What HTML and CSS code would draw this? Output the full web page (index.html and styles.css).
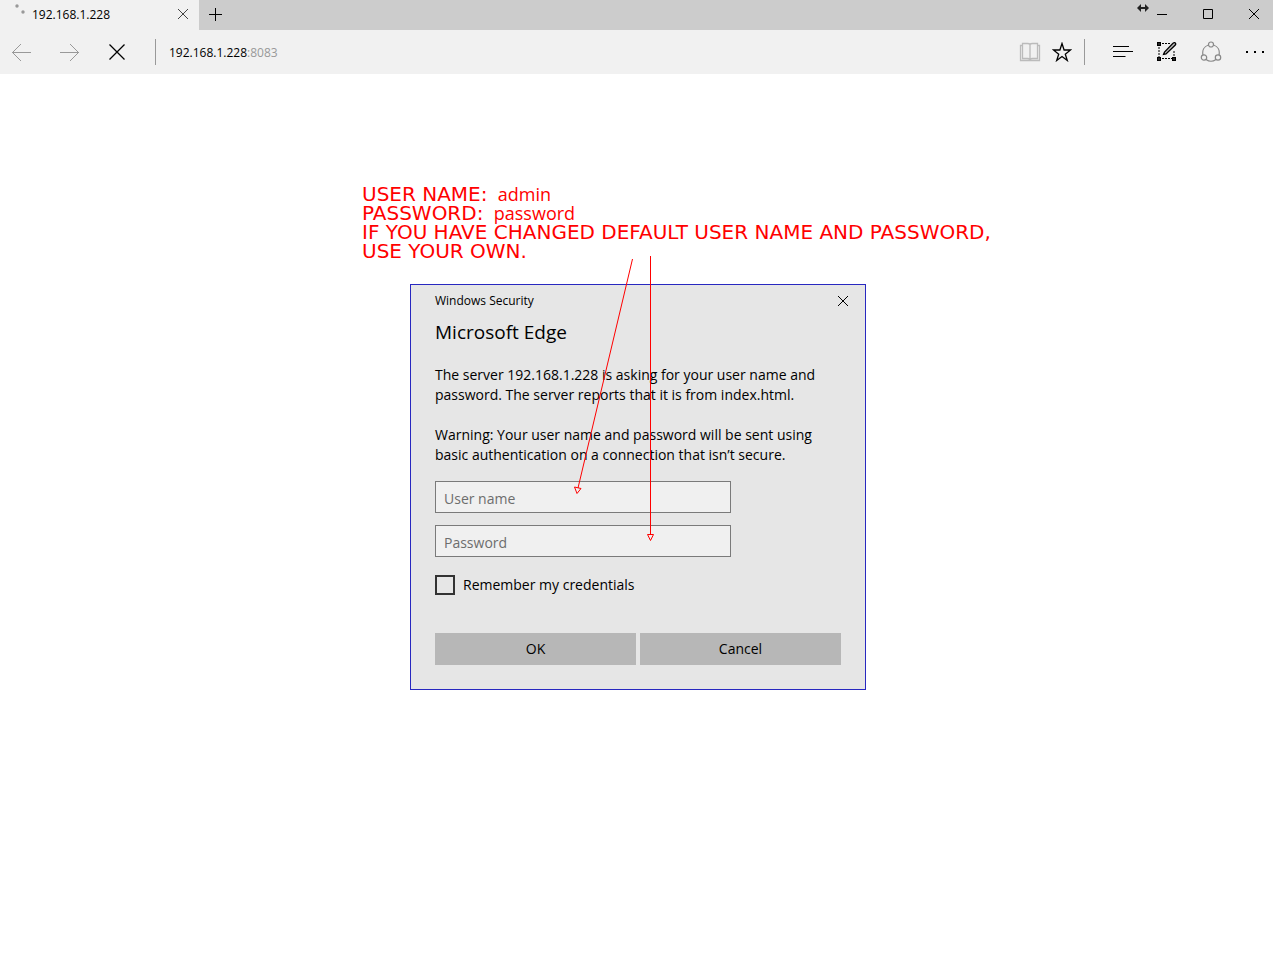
FILE: index.html
```html
<!DOCTYPE html>
<html lang="en">
<head>
    <meta charset="UTF-8">
    <meta name="viewport" content="width=device-width, initial-scale=1.0">
    <title>192.168.1.228</title>
    <link rel="stylesheet" href="styles.css">
</head>
<body>

<div class="titlebar">
    <div class="tab">
        <svg class="spinner" width="14" height="14" viewBox="0 0 14 14"><circle cx="5" cy="2" r="1.7"/><circle cx="11" cy="8" r="1.7"/></svg>
        <span class="tab-title">192.168.1.228</span>
        <button class="icon-button tab-close" aria-label="Close tab">
            <svg width="12" height="12" viewBox="0 0 12 12"><path d="M1 1l10 10M11 1L1 11"/></svg>
        </button>
    </div>
    <button class="icon-button new-tab" aria-label="New tab">
        <svg width="14" height="14" viewBox="0 0 14 14"><path d="M7.5 0v13M1 6.500h13"/></svg>
    </button>
    <div class="window-controls">
        <svg class="resize-cursor" width="12" height="8" viewBox="0 0 12 8"><path d="M0 4l4-4v3h4V0l4 4-4 4V5H4v3z"/></svg>
        <button class="icon-button" aria-label="Minimize">
            <svg width="12" height="12" viewBox="0 0 12 12"><path d="M1 5.500h10"/></svg>
        </button>
        <button class="icon-button" aria-label="Maximize">
            <svg width="12" height="12" viewBox="0 0 12 12"><path d="M1.500 .5h9v9h-9z"/></svg>
        </button>
        <button class="icon-button" aria-label="Close">
            <svg width="12" height="12" viewBox="0 0 12 12"><path d="M1 0l10 10M11 0L1 10"/></svg>
        </button>
    </div>
</div>

<div class="toolbar">
    <div class="nav-buttons">
        <button class="icon-button faded" aria-label="Back">
            <svg width="20" height="20" viewBox="0 0 20 20"><path d="M19 10.500H0M9 2L.5 10.500L9 19"/></svg>
        </button>
        <button class="icon-button faded" aria-label="Forward">
            <svg width="20" height="20" viewBox="0 0 20 20"><path d="M0 10.500h19M10 2l8.500 8.500L10 19"/></svg>
        </button>
        <button class="icon-button" aria-label="Stop">
            <svg width="20" height="20" viewBox="0 0 20 20" stroke-width="1.300"><path d="M1.500 2.500l15 15M16.500 2.500l-15 15"/></svg>
        </button>
    </div>
    <span class="divider"></span>
    <a class="address" href="http://192.168.1.228:8083">192.168.1.228<span class="port">:8083</span></a>

    <div class="page-buttons">
        <button class="icon-button disabled" aria-label="Reading view">
            <svg width="22" height="20" viewBox="0 0 22 20" stroke-width="1.300"><path d="M3.500 1.500h5q2 0 2.500 1 .5-1 2.500-1h5v15h-5q-2 0-2.500 1-.5-1-2.500-1h-5zM11 2.500v15M3 3.500H1.500v15h19v-15H19"/></svg>
        </button>
        <button class="icon-button" aria-label="Add to favorites">
            <svg width="20" height="20" viewBox="0 0 20 20" stroke-width="1.300"><path d="M10 1.500l2.100 6.500h6.400l-5.200 4.200 2 6.300-5.300-3.900-5.300 3.900 2-6.300L1.500 8h6.400z"/></svg>
        </button>
    </div>
    <span class="divider"></span>
    <div class="hub-buttons">
        <button class="icon-button" aria-label="Hub">
            <svg width="20" height="20" viewBox="0 0 20 20" stroke-width="1.200"><path d="M0 4.500h16M0 9.500h20M0 14.500h12.500"/></svg>
        </button>
        <button class="icon-button" aria-label="Make a web note">
            <svg width="20" height="20" viewBox="0 0 20 20">
                <path stroke-dasharray="2 1" d="M2 5v10M17 9v6M5 1.500h8M5 16.500h10"/>
                <path class="solid" d="M0 0h4v4H0zM0 15h4v4H0zM15 15h4v4h-4z"/>
                <path class="dot" d="M1.500 1.500h1v1h-1zM1.500 16.500h1v1h-1zM16.500 16.500h1v1h-1z"/>
                <path class="pen" d="M6.500 12.500l1-2.500L16 1.200q1.500-1 2.300-.2t0 2L9 12z"/>
            </svg>
        </button>
        <button class="icon-button share" aria-label="Share">
            <svg width="22" height="22" viewBox="0 0 22 22" stroke-width="1.200">
                <circle cx="11" cy="3.500" r="2.500"/><circle cx="4" cy="16.500" r="2.700"/><circle cx="18" cy="16.500" r="2.700"/>
                <path d="M8.500 4C4 5.500 2 9.500 3 14M13.500 4C18 5.500 20 9.500 19 14M6 18.500q5 3.500 10 0"/>
            </svg>
        </button>
        <button class="icon-button" aria-label="More">
            <svg width="20" height="20" viewBox="0 0 20 20"><path class="solid" d="M1 9h2v2H1zM9 9h2v2H9zM17 9h2v2h-2z"/></svg>
        </button>
    </div>
</div>

<main class="stage">
    <p class="note">
        USER NAME: <span class="value">admin</span><br>
        PASSWORD: <span class="value">password</span><br>
        IF YOU HAVE CHANGED DEFAULT USER NAME AND PASSWORD,<br>
        USE YOUR OWN.
    </p>

    <form class="dialog">
        <div class="dialog-bar">
            <span>Windows Security</span>
            <button type="button" class="icon-button" aria-label="Close dialog">
                <svg width="12" height="12" viewBox="0 0 12 12"><path d="M1 1l10 10M11 1L1 11"/></svg>
            </button>
        </div>
        <h1>Microsoft Edge</h1>
        <p>The server 192.168.1.228 is asking for your user name and<br>password. The server reports that it is from index.html.</p>
        <p>Warning: Your user name and password will be sent using<br>basic authentication on a connection that isn’t secure.</p>
        <div class="fields">
            <input class="field" type="text" placeholder="User name" aria-label="User name">
            <input class="field" type="password" placeholder="Password" aria-label="Password">
        </div>
        <label class="remember"><input type="checkbox"> Remember my credentials</label>
        <div class="actions">
            <button type="submit">OK</button>
            <button type="button">Cancel</button>
        </div>
    </form>

    <!-- Arrows from the note to the two fields -->
    <svg class="arrows" width="552" height="505" viewBox="0 0 552 505">
        <path d="M270.500 74L216 303M212.500 302l6.500 1.500-4 5zM288.500 71v279M285.500 349.500h6l-3 6z"/>
    </svg>
</main>

</body>
</html>
```

FILE: styles.css
```css
* {
    box-sizing: border-box;
}

body {
    margin: 0;
    background: #fff;
    color: #000;
    font-family: "Open Sans", "Noto Sans", sans-serif;
    font-size: 12px;
}

svg {
    display: block;
    fill: none;
    stroke: currentColor;
}

.solid {
    fill: currentColor;
    stroke: none;
}

.icon-button {
    display: flex;
    align-items: center;
    justify-content: center;
    flex: none;
    width: 24px;
    height: 24px;
    padding: 0;
    border: 0;
    background: none;
    color: #000;
}

/* Tabs and window controls */
.titlebar {
    display: flex;
    align-items: center;
    height: 30px;
    background: #ccc;
}

.tab {
    display: flex;
    align-items: center;
    width: 199px;
    height: 30px;
    padding: 0 4px 2px 12px;
    background: #f1f1f1;
}

.spinner {
    align-self: flex-start;
    margin-top: 4px;
    margin-right: 6px;
    fill: #999;
    stroke: none;
}

.tab-title {
    flex: 1;
}

.tab-close {
    color: #444;
}

.new-tab {
    margin-left: 4px;
}

.window-controls {
    position: relative;
    display: flex;
    gap: 22px;
    margin-left: auto;
    padding-right: 7px;
}

.resize-cursor {
    position: absolute;
    top: 1px;
    left: -13px;
    fill: #222;
    stroke: none;
}

/* Address row */
.toolbar {
    display: flex;
    align-items: center;
    height: 44px;
    padding: 0 6px 0 10px;
    background: #f1f1f1;
}

.nav-buttons {
    display: flex;
    gap: 24px;
}

.faded {
    color: #999;
}

.disabled {
    color: #bbb;
}

.share {
    color: #888;
}

.divider {
    width: 1px;
    height: 26px;
    background: #999;
}

.nav-buttons + .divider {
    margin: 0 13px 0 25px;
}

.address {
    flex: 1;
    color: #000;
    text-decoration: none;
}

.port {
    color: #999;
}

.page-buttons {
    display: flex;
    gap: 8px;
    margin-right: 10px;
}

.hub-buttons {
    display: flex;
    gap: 20px;
    margin-left: 26px;
}

.pen {
    fill: #bbb;
    stroke-width: 1.3;
}

.dot {
    fill: #999;
    stroke: none;
}

/* Note, dialog and arrows */
.stage {
    position: relative;
    width: 549px;
    margin: 111px auto 0;
}

.note {
    margin: 0 0 23px;
    color: #f00;
    font-family: "DejaVu Sans", sans-serif;
    font-size: 20px;
    line-height: 19px;
    white-space: nowrap;
}

.value {
    margin-left: 4px;
    font-family: "Open Sans", "Noto Sans", sans-serif;
    font-size: 18px;
    line-height: 1px;
}

.dialog {
    width: 456px;
    margin-left: 48px;
    padding: 4px 24px 24px;
    border: 1px solid #2828c0;
    background: #e6e6e6;
    font-size: 14px;
    line-height: 20px;
}

.dialog-bar {
    display: flex;
    align-items: center;
    justify-content: space-between;
    margin-right: -14px;
    font-size: 12px;
}

.dialog h1 {
    margin: 6px 0 20px;
    font-size: 19px;
    font-weight: 400;
    line-height: 26px;
}

.dialog p {
    margin: 20px 0 0;
    white-space: nowrap;
}

.fields {
    display: flex;
    flex-direction: column;
    gap: 12px;
    margin-top: 16px;
}

.field {
    width: 296px;
    height: 32px;
    padding: 2px 8px 0;
    border: 1px solid #7a7a7a;
    border-radius: 0;
    background: #f0f0f0;
    color: #000;
    font: inherit;
}

.field::placeholder {
    color: #6d6d6d;
}

.remember {
    display: flex;
    align-items: center;
    gap: 8px;
    margin-top: 18px;
}

.remember input {
    appearance: none;
    width: 20px;
    height: 20px;
    margin: 0;
    border: 2px solid #333;
}

.actions {
    display: flex;
    gap: 4px;
    margin-top: 38px;
}

.actions button {
    flex: 1;
    height: 32px;
    padding: 0;
    border: 0;
    background: #b7b7b7;
    color: #000;
    font: inherit;
}

.arrows {
    position: absolute;
    top: 0;
    left: 0;
    color: #f00;
    pointer-events: none;
}
```
